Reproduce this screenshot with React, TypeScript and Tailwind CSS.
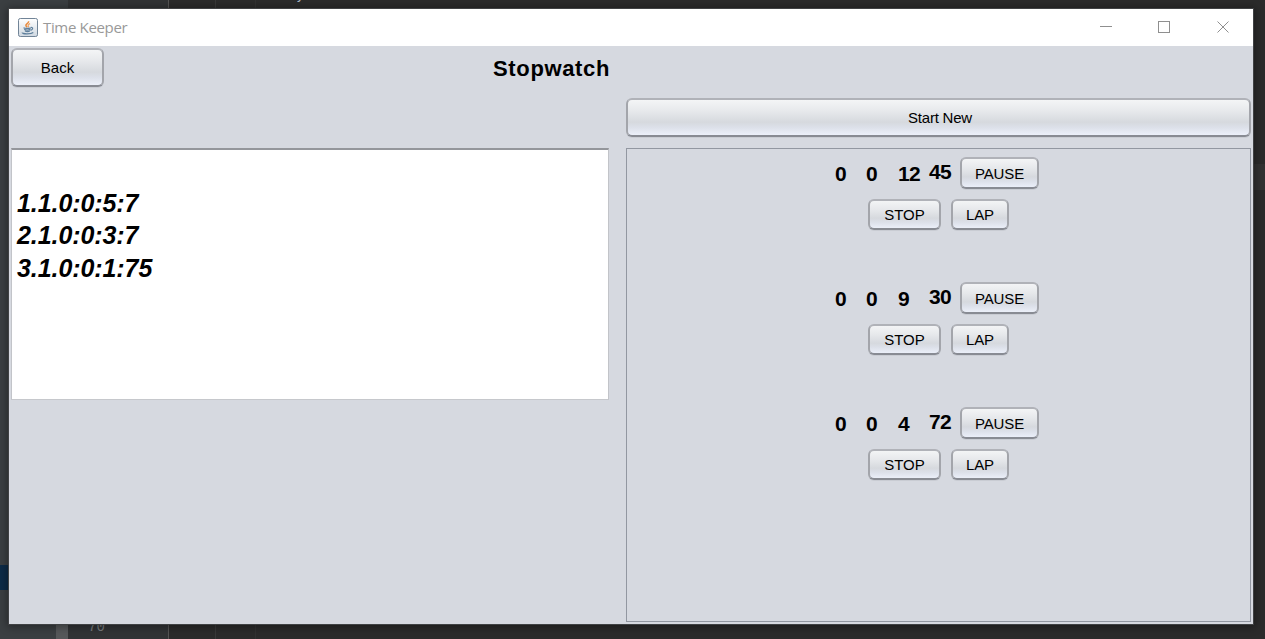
import type { ReactNode } from "react";

type Timer = { h: string; m: string; s: string; cs: string };

const timers: Timer[] = [
  { h: "0", m: "0", s: "12", cs: "45" },
  { h: "0", m: "0", s: "9", cs: "30" },
  { h: "0", m: "0", s: "4", cs: "72" },
];

const laps = ["1.1.0:0:5:7", "2.1.0:0:3:7", "3.1.0:0:1:75"];

function NimbusButton({ className, children }: { className: string; children: ReactNode }) {
  return (
    <button
      className={`flex shrink-0 items-center justify-center rounded-[6px] border-2 border-x-[#a3a5ab] border-t-[#b0b2b8] border-b-[#888b93] bg-[linear-gradient(to_bottom,#f6f7f8_0%,#e6e8eb_35%,#d6d9de_62%,#dce0e9_75%,#f0f4fe_100%)] bg-origin-border leading-none whitespace-pre text-black shadow-[0_1px_0_#c9ccd3] ${className}`}
    >
      {children}
    </button>
  );
}

function JavaIcon() {
  return (
    <svg width="20" height="19" viewBox="0 0 20 19" fill="none">
      <defs>
        <linearGradient id="tile" x1="0" y1="0" x2="0" y2="1">
          <stop offset="0" stopColor="#ffffff" />
          <stop offset="1" stopColor="#cfd8e1" />
        </linearGradient>
      </defs>
      <rect x="0.5" y="0.5" width="19" height="18" rx="1.8" fill="url(#tile)" stroke="#718497" />
      <path d="M10.6 3.300c.5 2-3.3 2.600-2.700 4.300.3.800 1 1.100 1.200 1.600" stroke="#e8893b" strokeWidth="1.500" />
      <path d="M12.100 5.600c-1.600.6-2.500 1.400-1.700 2.200.5.600.1 1.100-.3 1.400" stroke="#eda56a" strokeWidth="1.200" />
      <path d="M5.500 9.800c1.500.8 5.500.8 7.300 0M6.200 11.400c1.500.8 4.800.8 6.200 0M7 13c1.300.6 3.600.6 4.800 0" stroke="#5d7e9b" strokeWidth="1.300" />
      <path d="M12.800 9.500c2.600-.5 2.400 2.300-.3 2.800" stroke="#5d7e9b" strokeWidth="1.200" />
      <path d="M4.300 14.500c-.4 1.700 8.500 1.900 11 0" stroke="#5d7e9b" strokeWidth="1.400" />
    </svg>
  );
}

function TitleBar() {
  return (
    <header className="flex h-[37px] shrink-0 items-center bg-white pl-[9px] text-[#999999]">
      <div className="-mt-px"><JavaIcon /></div>
      <span className="ml-[5px] grow font-['Open_Sans','Noto_Sans',sans-serif] text-[15px] leading-none tracking-[-0.34px]">Time Keeper</span>
      <svg width="131" height="13" viewBox="0 0 131 13" fill="none" stroke="#8f8f8f" className="mr-[22px]" shapeRendering="crispEdges">
        <path d="M0 5.500h12" />
        <rect x="58.500" y="0.500" width="11" height="11" />
        <path d="M117.500 0.500l11 11M128.500 0.500l-11 11" shapeRendering="auto" />
      </svg>
    </header>
  );
}

function TimerBlock({ t }: { t: Timer }) {
  return (
    <div className="h-[125px] pt-2 text-[21px] leading-[34px] font-bold tracking-[-0.6px]">
      <div className="flex h-8 pl-[208px]">
        <span className="w-[31px]">{t.h}</span>
        <span className="w-8">{t.m}</span>
        <span className="w-[31px]">{t.s}</span>
        <span className="-mt-[2px] w-[31px]">{t.cs}</span>
        <NimbusButton className="h-8 w-[79px] text-[15px] font-normal tracking-[-0.1px]">PAUSE</NimbusButton>
      </div>
      <div className="mt-[9px] flex gap-[10px] pt-px pl-[241px]">
        <NimbusButton className="h-[31px] w-[73px] text-[15px] font-normal tracking-normal">STOP</NimbusButton>
        <NimbusButton className="h-[31px] w-[58px] text-[15px] font-normal tracking-[-0.2px]">LAP</NimbusButton>
      </div>
    </div>
  );
}

function Backdrop() {
  return (
    <div className="absolute inset-0 flex overflow-hidden bg-[#2b2b2b]">
      <div className="flex w-[68px] flex-col bg-[#3b3f42]">
        <div className="mt-[565px] h-[25px] bg-[#0d2b47]" />
        <div className="ml-14 grow bg-[#56585a]" />
      </div>
      <div className="flex w-[101px] items-end border-r border-[#555555] bg-[#313335] pb-[3px] pl-5 font-['Liberation_Mono',monospace] text-[14px] leading-[18px] text-[#777b7e]">
        70
      </div>
      <div className="w-[47px] border-r border-[#393939]" />
      <div className="w-10 border-r border-[#323232]" />
      <div className="ml-[41px] -mt-[13px] text-[14px] leading-none text-[#a9b7c6]">y</div>
      <div className="mt-[164px] ml-auto h-[26px] w-3 bg-[#323232]" />
    </div>
  );
}

export default function App() {
  return (
    <main className="relative h-[639px] w-[1265px] overflow-hidden p-[9px] font-['Liberation_Sans',Arial,sans-serif] text-black">
      <Backdrop />
      <section className="relative flex h-[615px] w-[1244px] flex-col bg-[#d6d9e0] shadow-[0_0_0_1px_#404244,0_1px_8px_2px_#00000060]">
        <TitleBar />
        <div className="flex h-[52px] pt-[2px] pl-[2px]">
          <NimbusButton className="h-[39px] w-[93px] pb-px text-[15px]">Back</NimbusButton>
          <h1 className="ml-[389px] text-[22px] leading-[41px] font-bold tracking-[0.65px]">Stopwatch</h1>
        </div>
        <div className="flex gap-[17px] pl-[2px]">
          <div className="mt-[50px] h-[252px] w-[598px] border border-t-2 border-x-[#c2c4c9] border-t-[#94969b] border-b-[#c6c8cc] bg-white pt-[37px] pl-[5px] text-[25px] leading-[32.400px] font-bold tracking-[-0.08px] italic">
            {laps.map((lap) => (
              <div key={lap}>{lap}</div>
            ))}
          </div>
          <div className="flex w-[625px] flex-col">
            <NimbusButton className="h-[39px] w-full pb-px pl-[3px] text-[15px] tracking-[-0.22px]">Start New</NimbusButton>
            <div className="mt-[11px] h-[474px] border border-[#9297a1]">
              {timers.map((t) => (
                <TimerBlock key={t.cs} t={t} />
              ))}
            </div>
          </div>
        </div>
      </section>
    </main>
  );
}
